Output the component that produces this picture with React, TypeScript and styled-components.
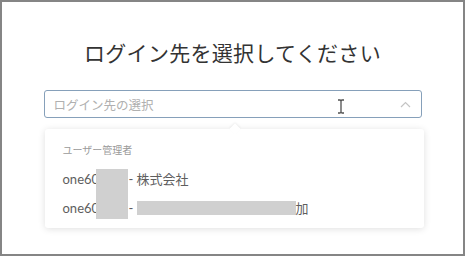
import React from 'react';
import styled, { createGlobalStyle } from 'styled-components';

const GlobalStyle = createGlobalStyle`
  html, body {
    margin: 0;
    padding: 0;
    background: #ffffff;
  }
  * {
    box-sizing: border-box;
  }
`;

const Frame = styled.div`
  width: 465px;
  height: 256px;
  border: 2px solid #858585;
  background: #ffffff;
  padding-top: 36px;
  font-family: Lato, 'Noto Sans CJK JP', sans-serif;
  overflow: hidden;
`;

const Title = styled.h1`
  margin: 0;
  font-family: 'Noto Sans CJK JP', sans-serif;
  font-size: 21px;
  font-weight: 400;
  line-height: 28px;
  color: #333333;
  text-align: center;
  letter-spacing: 0.3px;
`;

const SelectWrap = styled.div`
  position: relative;
  width: 378px;
  margin: 24px auto 0;
`;

const SelectBox = styled.div`
  height: 28px;
  border: 1.5px solid #86a0ba;
  border-radius: 3px;
  display: flex;
  align-items: center;
  justify-content: space-between;
  padding: 0 10px 0 9px;
`;

const Placeholder = styled.span`
  font-family: 'Noto Sans CJK JP', sans-serif;
  font-size: 12.5px;
  color: #b0b0b0;
`;

const Chevron = styled.svg`
  display: block;
`;

const Cursor = styled.svg`
  position: absolute;
  left: 293px;
  top: 9px;
`;

const Menu = styled.div`
  position: absolute;
  left: 1px;
  top: 39px;
  width: 379px;
  background: #ffffff;
  border-radius: 3px;
  box-shadow: 0 1px 7px rgba(0, 0, 0, 0.13);
  padding: 13px 0 6px 18px;
`;

const Notch = styled.div`
  position: absolute;
  left: 186px;
  top: -4px;
  width: 8px;
  height: 8px;
  background: #ffffff;
  transform: rotate(45deg);
  box-shadow: -1px -1px 2px rgba(0, 0, 0, 0.06);
`;

const GroupLabel = styled.div`
  font-family: 'Noto Sans CJK JP', sans-serif;
  font-size: 10px;
  line-height: 16px;
  color: #9a9a9a;
  margin-bottom: 6px;
`;

const Option = styled.div`
  height: 29px;
  display: flex;
  align-items: center;
  font-size: 13px;
  color: #5e5e5e;
  white-space: pre;
`;

const Hidden = styled.span`
  display: inline-block;
  width: 26px;
`;

const Bar = styled.span<{ $w: number }>`
  display: inline-block;
  width: ${(p) => p.$w}px;
  height: 14px;
  background: #d0d0d0;
`;

const Redact = styled.div`
  position: absolute;
  left: 51px;
  top: 40px;
  width: 32px;
  height: 50px;
  background: #d0d0d0;
`;

export default function App() {
  return (
    <>
      <GlobalStyle />
      <Frame>
        <Title>ログイン先を選択してください</Title>
        <SelectWrap>
          <SelectBox>
            <Placeholder>ログイン先の選択</Placeholder>
            <Chevron width="11" height="7" viewBox="0 0 11 7">
              <path d="M1 6 L5.5 1.5 L10 6" fill="none" stroke="#c4c4c4" strokeWidth="1.2" />
            </Chevron>
          </SelectBox>
          <Cursor width="8" height="15" viewBox="0 0 8 15">
            <path
              d="M1 1 H3 Q4 1 4 2.5 V12.5 Q4 14 3 14 H1 M7 1 H5 Q4 1 4 2.5 M4 12.5 Q4 14 5 14 H7"
              fill="none"
              stroke="#505050"
              strokeWidth="1.3"
            />
          </Cursor>
          <Menu>
            <Notch />
            <GroupLabel>ユーザー管理者</GroupLabel>
            <Option>
              one60<Hidden />{' - 株式会社'}
            </Option>
            <Option>
              one60<Hidden />{' - '}<Bar $w={159} />加
            </Option>
            <Redact />
          </Menu>
        </SelectWrap>
      </Frame>
    </>
  );
}
